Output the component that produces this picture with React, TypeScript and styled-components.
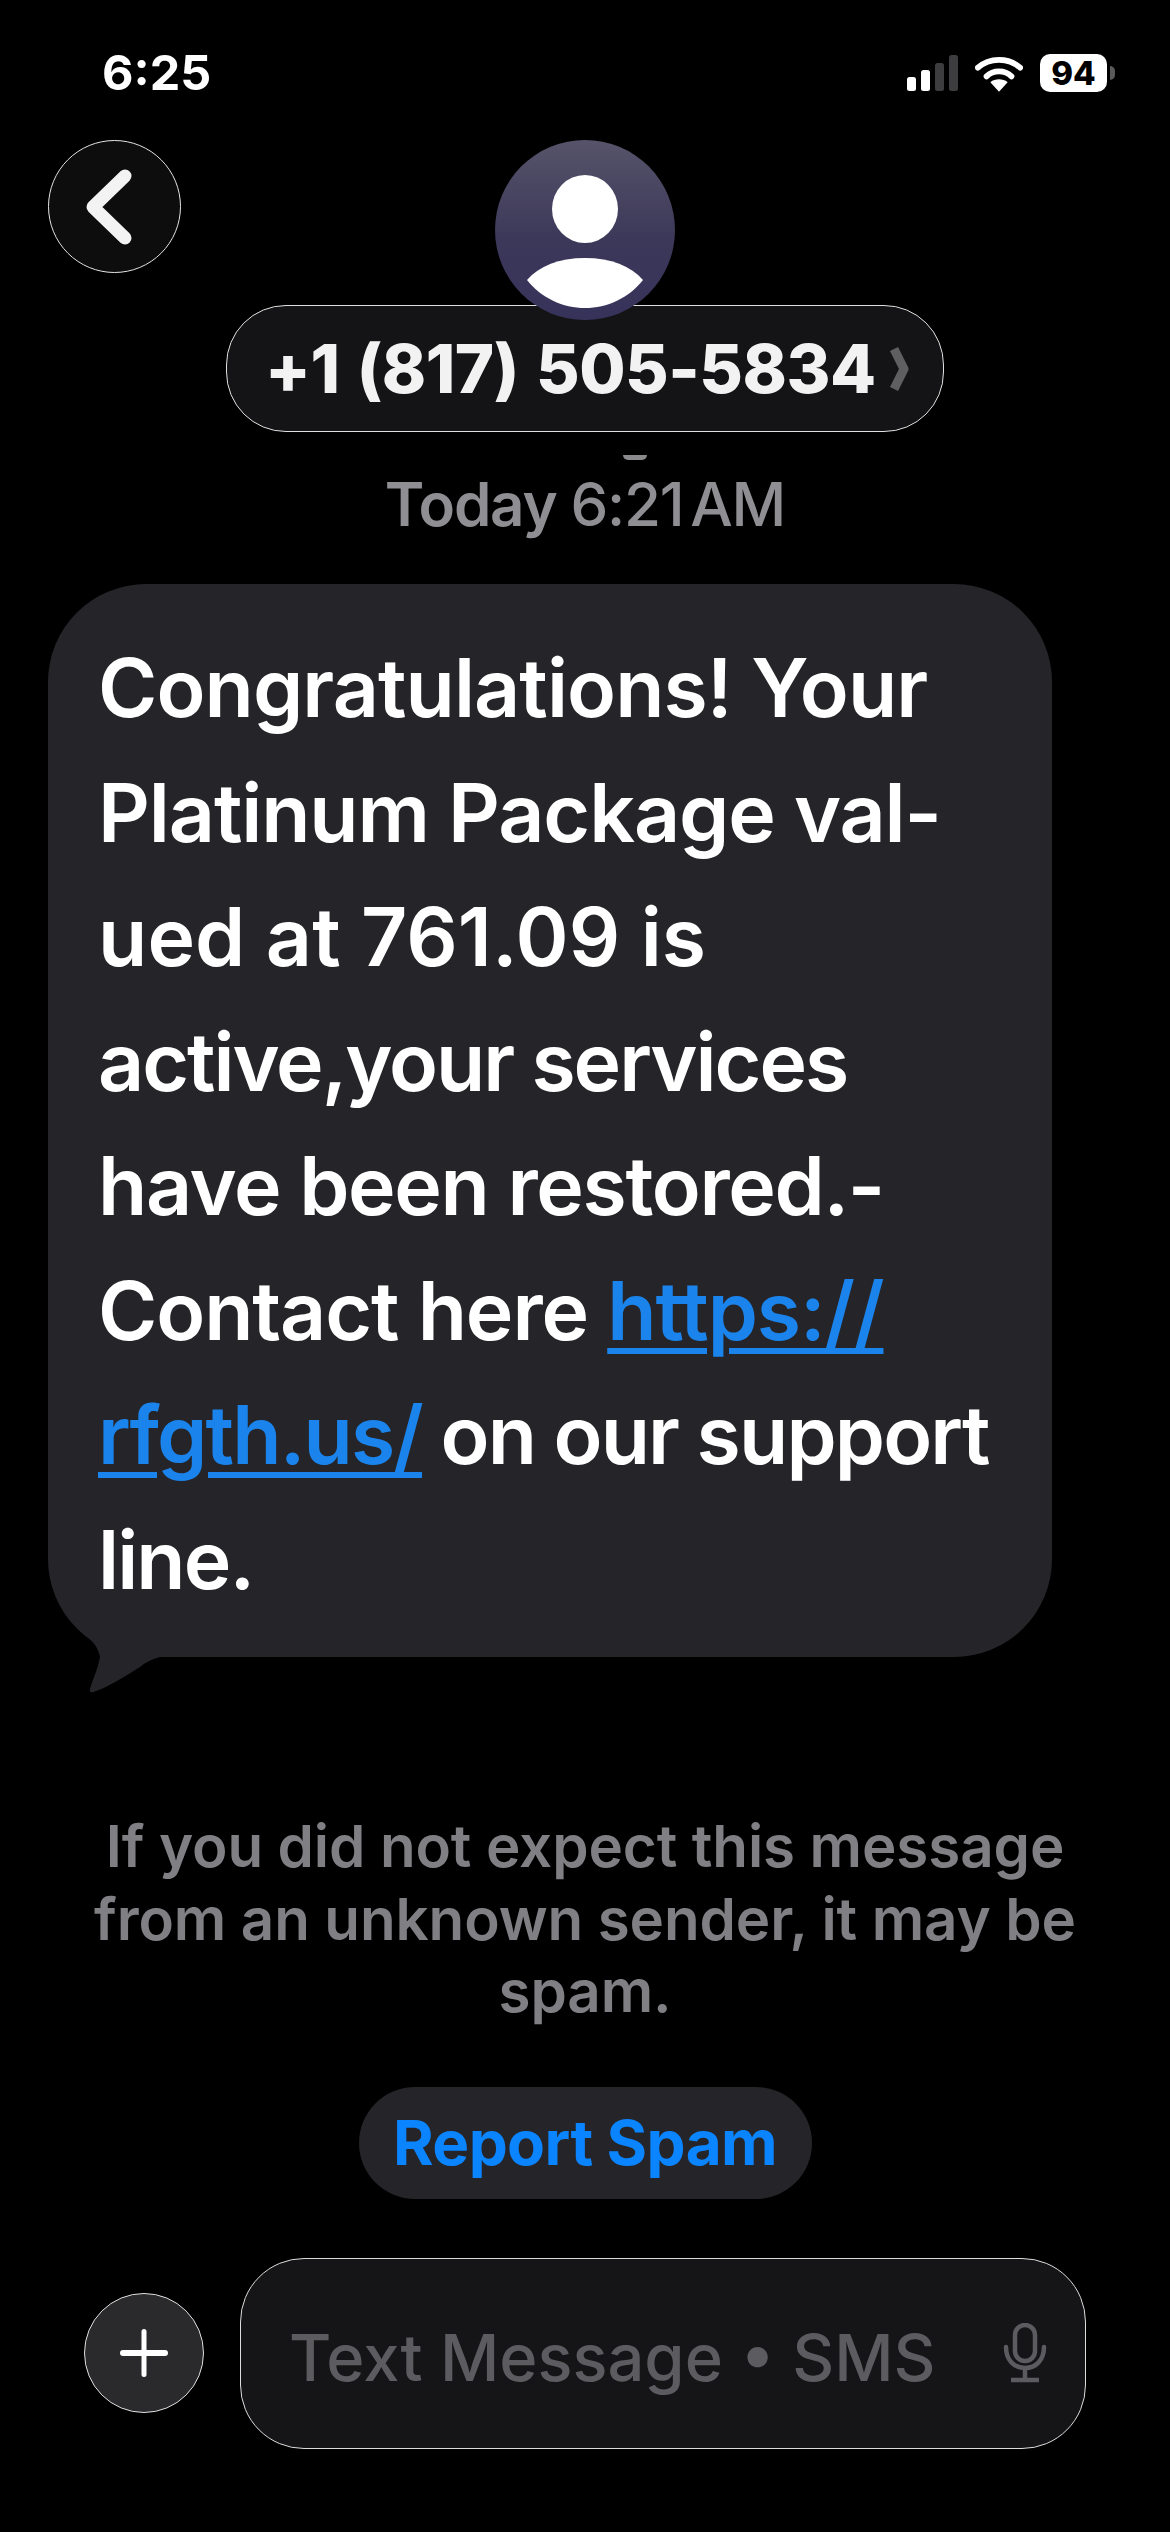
import React from "react";
import styled, { createGlobalStyle } from "styled-components";

const Global = createGlobalStyle`
  html, body { margin: 0; padding: 0; background: #000; }
  * { box-sizing: border-box; }
`;

const Page = styled.div`
  width: 1170px;
  height: 2532px;
  background: #000;
  color: #fff;
  font-family: Inter, "Liberation Sans", sans-serif;
  display: flex;
  flex-direction: column;
  overflow: hidden;
`;

const StatusBar = styled.div`
  height: 140px;
  padding: 46px 63px 0 102px;
  display: flex;
  justify-content: space-between;
  align-items: flex-start;
`;

const Clock = styled.div`
  font-size: 48.5px;
  font-weight: 700;
  line-height: 54px;
`;

const StatusIcons = styled.div`
  display: flex;
  align-items: center;
  gap: 17px;
  height: 54px;
`;

const Battery = styled.div`
  position: relative;
  width: 67px;
  height: 38px;
  border-radius: 10px;
  background: #fff;
  color: #000;
  font-size: 33px;
  font-weight: 800;
  line-height: 38px;
  text-align: center;
  &::after {
    content: "";
    position: absolute;
    right: -8px;
    top: 12px;
    width: 5px;
    height: 14px;
    border-radius: 0 5px 5px 0;
    background: #5a5a5c;
  }
`;

const Header = styled.div`
  position: relative;
  height: 292px;
  display: flex;
  flex-direction: column;
  align-items: center;
`;

const BackButton = styled.div`
  position: absolute;
  left: 48px;
  top: 0;
  width: 133px;
  height: 133px;
  border-radius: 50%;
  border: 1.5px solid #e4e4e4;
  background: #0d0d0e;
  display: flex;
  align-items: center;
  justify-content: center;
`;

const Avatar = styled.div`
  position: relative;
  z-index: 1;
  width: 180px;
  height: 180px;
  border-radius: 50%;
  background: linear-gradient(180deg, #56536a 0%, #3c3859 55%, #37325a 100%);
  overflow: hidden;
  flex: none;
`;

const NamePill = styled.div`
  width: 718px;
  height: 127px;
  margin-top: -15px;
  border-radius: 60px;
  border: 1.5px solid #e0e0e0;
  background: #141416;
  display: flex;
  align-items: center;
  padding-left: 38px;
  gap: 13px;
  flex: none;
`;

const NameText = styled.span`
  font-size: 67px;
  font-weight: 800;
  color: #f2f2f2;
  white-space: nowrap;
  letter-spacing: -0.5px;
  word-spacing: 3px;
`;

const Speck = styled.div`
  position: absolute;
  left: 623px;
  top: 315px;
  width: 24px;
  height: 5px;
  border-radius: 0 0 12px 12px;
  background: #8a8a8c;
`;

const Timestamp = styled.div`
  text-align: center;
  font-size: 60px;
  line-height: 68px;
  font-weight: 600;
  color: #8e8e93;
  letter-spacing: -1.2px;
  margin-top: 38px;
  height: 68px;
`;

const Thin = styled.span`
  font-weight: 500;
  word-spacing: -8px;
`;

const BubbleWrap = styled.div`
  position: relative;
  margin: 46px 0 0 48px;
  width: 1004px;
  height: 1073px;
  flex: none;
`;

const Bubble = styled.div`
  width: 100%;
  height: 100%;
  border-radius: 98px;
  background: #252529;
  padding: 42px 30px 0 50px;
  font-size: 80.5px;
  line-height: 124.5px;
  font-weight: 570;
  white-space: nowrap;
  color: #fff;
`;

const Line = styled.div<{ $track: number }>`
  letter-spacing: ${(p) => p.$track}px;
`;

const Tail = styled.svg`
  position: absolute;
  left: 0;
  bottom: -42px;
`;

const Link = styled.span`
  color: #1a84ec;
  text-decoration: underline;
  text-decoration-thickness: 6px;
  text-underline-offset: 8px;
`;

const SpamNotice = styled.div`
  margin-top: 153px;
  text-align: center;
  font-size: 58.3px;
  line-height: 72.5px;
  font-weight: 600;
  color: #7f7f84;
  letter-spacing: -0.1px;
`;

const ReportButton = styled.div`
  align-self: center;
  margin-top: 59px;
  width: 453px;
  height: 112px;
  border-radius: 56px;
  background: #252529;
  color: #0a84ff;
  font-size: 62px;
  font-weight: 700;
  display: flex;
  align-items: center;
  justify-content: center;
  letter-spacing: -0.6px;
`;

const Composer = styled.div`
  margin-top: 59px;
  padding-left: 84px;
  display: flex;
  align-items: center;
  gap: 36px;
`;

const PlusButton = styled.div`
  width: 120px;
  height: 120px;
  border-radius: 50%;
  border: 1.5px solid #e0e0e0;
  background: #2a2a2d;
  display: flex;
  align-items: center;
  justify-content: center;
  flex: none;
`;

const InputBox = styled.div`
  width: 846px;
  height: 191px;
  border-radius: 64px;
  border: 1.5px solid #dcdcdc;
  background: #151517;
  display: flex;
  align-items: center;
  justify-content: space-between;
  padding: 0 38px 0 48px;
`;

const Placeholder = styled.span`
  font-size: 65px;
  font-weight: 500;
  color: #5c5c60;
  white-space: nowrap;
  margin-top: 8px;
`;

export default function App() {
  return (
    <Page>
      <Global />
      <StatusBar>
        <Clock>6:25</Clock>
        <StatusIcons>
          <svg width="51" height="36" viewBox="0 0 51 36">
            <rect x="0" y="22" width="9" height="14" rx="2.5" fill="#fff" />
            <rect x="14" y="15" width="9" height="21" rx="2.5" fill="#fff" />
            <rect x="28" y="8" width="9" height="28" rx="2.5" fill="#3d3d3f" />
            <rect x="42" y="0" width="9" height="36" rx="2.5" fill="#3d3d3f" />
          </svg>
          <svg width="48" height="37" viewBox="0 0 50 38" fill="none">
            <path d="M3 13C15 2 35 2 47 13" stroke="#fff" strokeWidth="6" strokeLinecap="round" />
            <path d="M12 22C19 15 31 15 38 22" stroke="#fff" strokeWidth="6" strokeLinecap="round" />
            <path d="M25 38L16 28C21 24 29 24 34 28Z" fill="#fff" />
          </svg>
          <Battery>94</Battery>
        </StatusIcons>
      </StatusBar>
      <Header>
        <BackButton>
          <svg width="60" height="86" viewBox="0 0 60 86" fill="none">
            <path d="M40 12L8 43L40 74" stroke="#f3f3f3" strokeWidth="13" strokeLinecap="round" strokeLinejoin="round" />
          </svg>
        </BackButton>
        <Avatar>
          <svg width="180" height="180" viewBox="0 0 180 180">
            <ellipse cx="90" cy="69" rx="33" ry="34" fill="#fff" />
            <path d="M32 140C44 126 64 118 90 118C116 118 136 126 148 140C134 158 112 168 90 168C68 168 46 158 32 140Z" fill="#fff" />
          </svg>
        </Avatar>
        <NamePill>
          <NameText>+1 (817) 505-5834</NameText>
          <svg width="20" height="46" viewBox="0 0 20 46" fill="none">
            <path d="M5 3L15 23L5 43" stroke="#5f5f62" strokeWidth="9" strokeLinejoin="round" />
          </svg>
        </NamePill>
        <Speck />
      </Header>
      <Timestamp>
        Today <Thin>6:21 AM</Thin>
      </Timestamp>
      <BubbleWrap>
        <Bubble>
          <Line $track={-0.9}>Congratulations! Your</Line>
          <Line $track={-1.1}>Platinum Package val-</Line>
          <Line $track={0.1}>ued at 761.09 is</Line>
          <Line $track={-2.05}>active,your services</Line>
          <Line $track={-1.33}>have been restored.-</Line>
          <Line $track={-1.07}>
            Contact here <Link>https://</Link>
          </Line>
          <Line $track={-1.85}>
            <Link>rfgth.us/</Link> on our support
          </Line>
          <Line $track={-1.9}>line.</Line>
        </Bubble>
        <Tail width="112" height="140" viewBox="0 0 112 140">
          <path d="M20 50C24 60 28 68 32 72C42 80 50 86 52 98C50 110 44 122 42 130C41 134 44 134 48 132C60 128 76 118 92 108C98 103 104 100 112 98L112 50Z" fill="#252529" />
        </Tail>
      </BubbleWrap>
      <SpamNotice>
        If you did not expect this message
        <br />
        from an unknown sender, it may be
        <br />
        spam.
      </SpamNotice>
      <ReportButton>Report Spam</ReportButton>
      <Composer>
        <PlusButton>
          <svg width="52" height="52" viewBox="0 0 52 52">
            <rect x="23.5" y="2" width="5" height="48" rx="2.5" fill="#fff" />
            <rect x="2" y="23" width="48" height="6" rx="3" fill="#fff" />
          </svg>
        </PlusButton>
        <InputBox>
          <Placeholder>Text Message • SMS</Placeholder>
          <svg width="44" height="60" viewBox="0 0 44 60" fill="none">
            <rect x="12" y="2" width="20" height="36" rx="10" stroke="#5c5c60" strokeWidth="4.5" />
            <path d="M3 24C3 37 11 45 22 45C33 45 41 37 41 24" stroke="#5c5c60" strokeWidth="4.5" strokeLinecap="round" />
            <path d="M22 45V55M8 57H36" stroke="#5c5c60" strokeWidth="4.5" />
          </svg>
        </InputBox>
      </Composer>
    </Page>
  );
}
